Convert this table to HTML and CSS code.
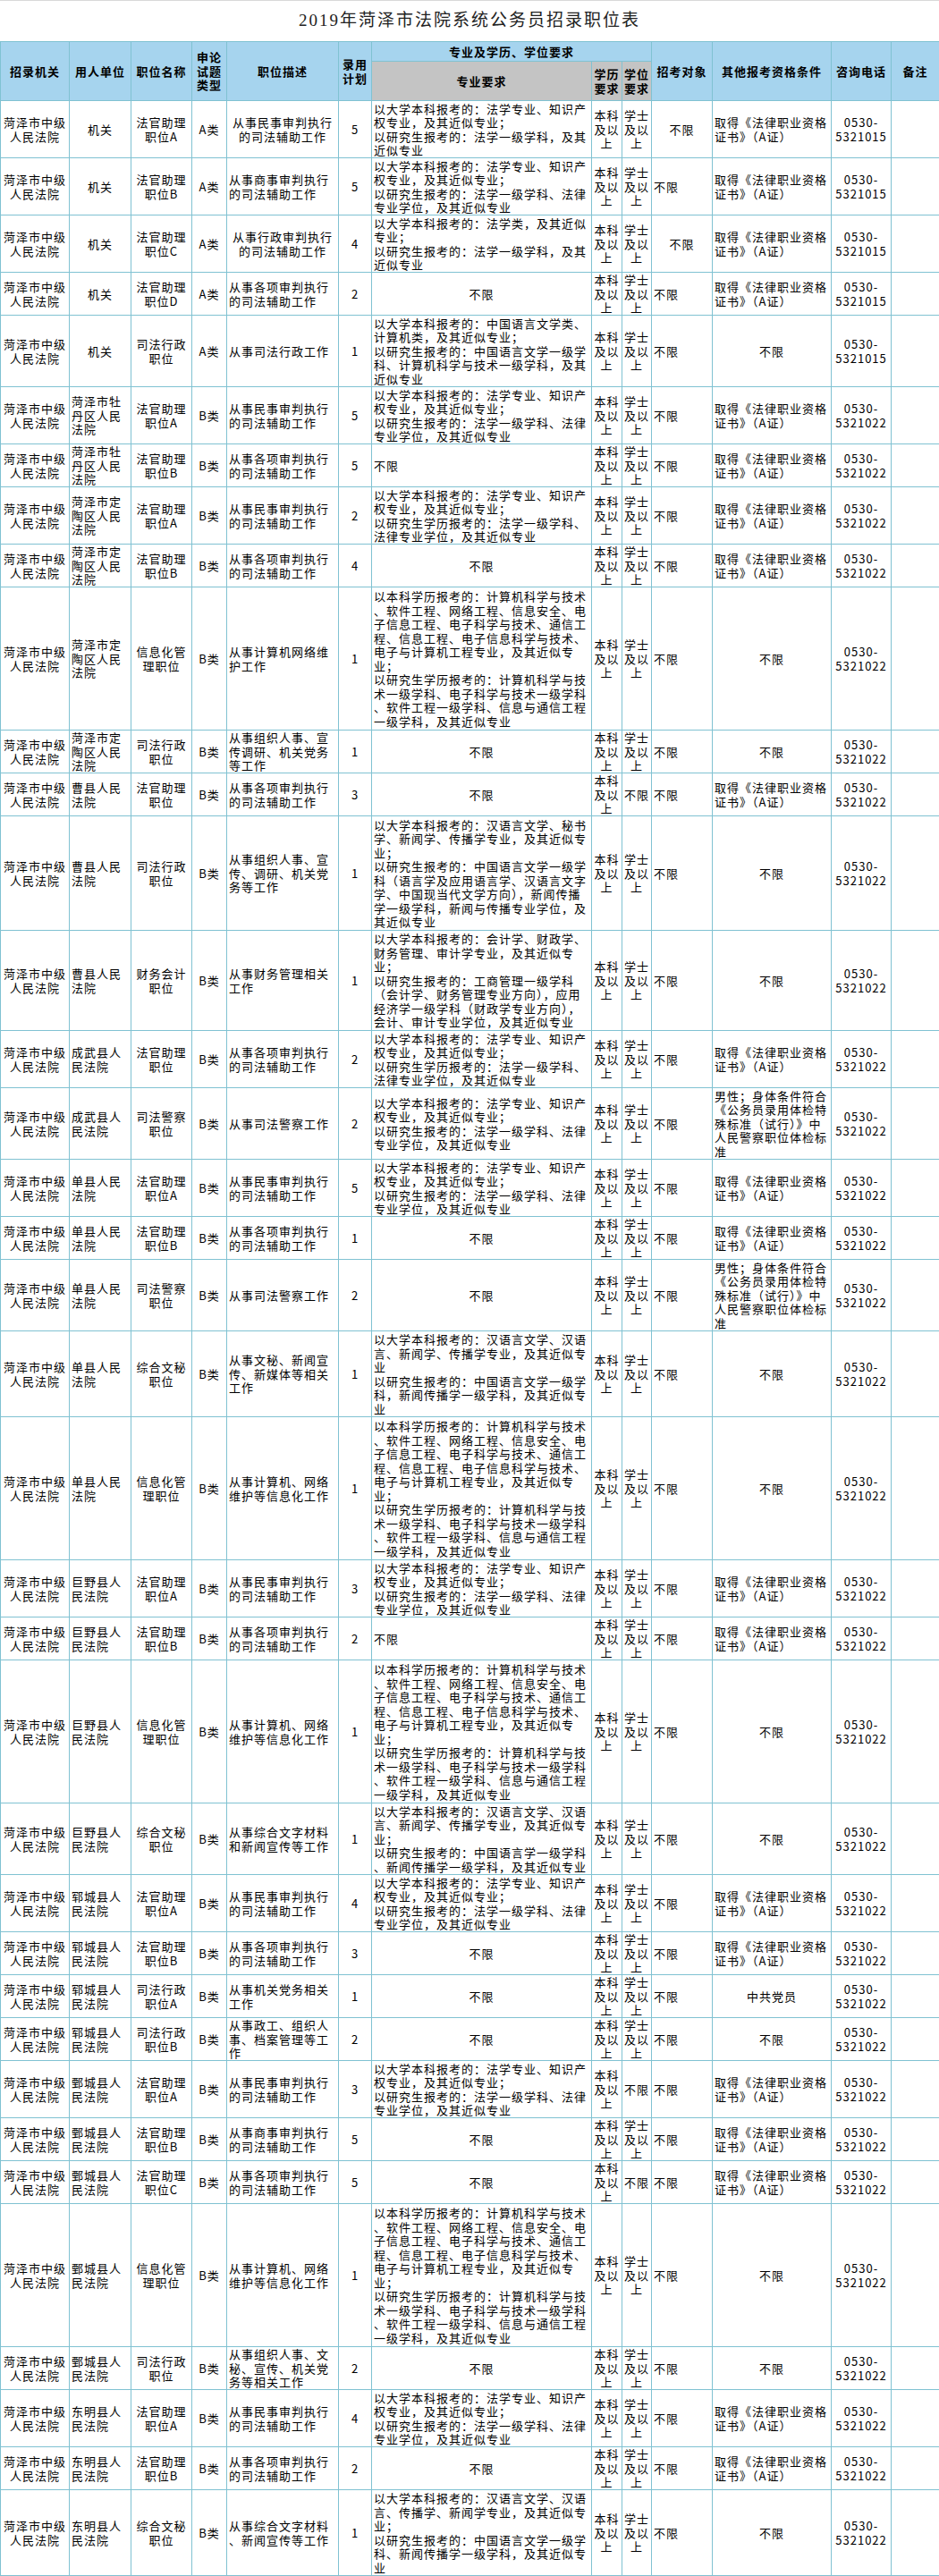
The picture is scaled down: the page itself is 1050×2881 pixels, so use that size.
FILE: index.html
```html
<!DOCTYPE html>
<html lang="zh-CN">
<head>
<meta charset="utf-8">
<title>2019年菏泽市法院系统公务员招录职位表</title>
<link rel="stylesheet" href="styles.css">
</head>
<body>
<div class="title">2019年菏泽市法院系统公务员招录职位表</div>
<table class="grid">
<colgroup>
<col class="c1"><col class="c2"><col class="c3"><col class="c4"><col class="c5"><col class="c6"><col class="c7"><col class="c8"><col class="c9"><col class="c10"><col class="c11"><col class="c12"><col class="c13">
</colgroup>
<thead>
<tr class="hd1">
<th rowspan="2">招录机关</th><th rowspan="2">用人单位</th><th rowspan="2">职位名称</th><th rowspan="2">申论<br>试题<br>类型</th><th rowspan="2">职位描述</th><th rowspan="2">录用<br>计划</th><th colspan="3">专业及学历、学位要求</th><th rowspan="2">招考对象</th><th rowspan="2">其他报考资格条件</th><th rowspan="2">咨询电话</th><th rowspan="2">备注</th>
</tr>
<tr class="hd2">
<th class="gray">专业要求</th><th class="gray">学历<br>要求</th><th class="gray">学位<br>要求</th>
</tr>
</thead>
<tbody>
<tr class="h4"><td>菏泽市中级<br>人民法院</td><td>机关</td><td>法官助理<br>职位A</td><td>A类</td><td>从事民事审判执行<br>的司法辅助工作</td><td>5</td><td class="l">以大学本科报考的：法学专业、知识产<br>权专业，及其近似专业；<br>以研究生报考的：法学一级学科，及其<br>近似专业</td><td>本科<br>及以<br>上</td><td>学士<br>及以<br>上</td><td>不限</td><td class="l">取得《法律职业资格<br>证书》（A证）</td><td>0530-<br>5321015</td><td></td></tr>
<tr class="h4"><td>菏泽市中级<br>人民法院</td><td>机关</td><td>法官助理<br>职位B</td><td>A类</td><td class="l">从事商事审判执行<br>的司法辅助工作</td><td>5</td><td class="l">以大学本科报考的：法学专业、知识产<br>权专业，及其近似专业；<br>以研究生报考的：法学一级学科、法律<br>专业学位，及其近似专业</td><td>本科<br>及以<br>上</td><td>学士<br>及以<br>上</td><td class="l">不限</td><td class="l">取得《法律职业资格<br>证书》（A证）</td><td>0530-<br>5321015</td><td></td></tr>
<tr class="h4"><td>菏泽市中级<br>人民法院</td><td>机关</td><td>法官助理<br>职位C</td><td>A类</td><td>从事行政审判执行<br>的司法辅助工作</td><td>4</td><td class="l">以大学本科报考的：法学类，及其近似<br>专业；<br>以研究生报考的：法学一级学科，及其<br>近似专业</td><td>本科<br>及以<br>上</td><td>学士<br>及以<br>上</td><td>不限</td><td class="l">取得《法律职业资格<br>证书》（A证）</td><td>0530-<br>5321015</td><td></td></tr>
<tr class="h3"><td>菏泽市中级<br>人民法院</td><td>机关</td><td>法官助理<br>职位D</td><td>A类</td><td class="l">从事各项审判执行<br>的司法辅助工作</td><td>2</td><td>不限</td><td>本科<br>及以<br>上</td><td>学士<br>及以<br>上</td><td class="l">不限</td><td class="l">取得《法律职业资格<br>证书》（A证）</td><td>0530-<br>5321015</td><td></td></tr>
<tr class="h5"><td>菏泽市中级<br>人民法院</td><td>机关</td><td>司法行政<br>职位</td><td>A类</td><td class="l">从事司法行政工作</td><td>1</td><td class="l">以大学本科报考的：中国语言文学类、<br>计算机类，及其近似专业；<br>以研究生报考的：中国语言文学一级学<br>科、计算机科学与技术一级学科，及其<br>近似专业</td><td>本科<br>及以<br>上</td><td>学士<br>及以<br>上</td><td class="l">不限</td><td>不限</td><td>0530-<br>5321015</td><td></td></tr>
<tr class="h4"><td>菏泽市中级<br>人民法院</td><td class="l">菏泽市牡<br>丹区人民<br>法院</td><td>法官助理<br>职位A</td><td>B类</td><td class="l">从事民事审判执行<br>的司法辅助工作</td><td>5</td><td class="l">以大学本科报考的：法学专业、知识产<br>权专业，及其近似专业；<br>以研究生报考的：法学一级学科、法律<br>专业学位，及其近似专业</td><td>本科<br>及以<br>上</td><td>学士<br>及以<br>上</td><td class="l">不限</td><td class="l">取得《法律职业资格<br>证书》（A证）</td><td>0530-<br>5321022</td><td></td></tr>
<tr class="h3"><td>菏泽市中级<br>人民法院</td><td class="l">菏泽市牡<br>丹区人民<br>法院</td><td>法官助理<br>职位B</td><td>B类</td><td class="l">从事各项审判执行<br>的司法辅助工作</td><td>5</td><td class="l">不限</td><td>本科<br>及以<br>上</td><td>学士<br>及以<br>上</td><td class="l">不限</td><td class="l">取得《法律职业资格<br>证书》（A证）</td><td>0530-<br>5321022</td><td></td></tr>
<tr class="h4"><td>菏泽市中级<br>人民法院</td><td class="l">菏泽市定<br>陶区人民<br>法院</td><td>法官助理<br>职位A</td><td>B类</td><td class="l">从事民事审判执行<br>的司法辅助工作</td><td>2</td><td class="l">以大学本科报考的：法学专业、知识产<br>权专业，及其近似专业；<br>以研究生学历报考的：法学一级学科、<br>法律专业学位，及其近似专业</td><td>本科<br>及以<br>上</td><td>学士<br>及以<br>上</td><td class="l">不限</td><td class="l">取得《法律职业资格<br>证书》（A证）</td><td>0530-<br>5321022</td><td></td></tr>
<tr class="h3"><td>菏泽市中级<br>人民法院</td><td class="l">菏泽市定<br>陶区人民<br>法院</td><td>法官助理<br>职位B</td><td>B类</td><td class="l">从事各项审判执行<br>的司法辅助工作</td><td>4</td><td>不限</td><td>本科<br>及以<br>上</td><td>学士<br>及以<br>上</td><td class="l">不限</td><td class="l">取得《法律职业资格<br>证书》（A证）</td><td>0530-<br>5321022</td><td></td></tr>
<tr class="h10"><td>菏泽市中级<br>人民法院</td><td class="l">菏泽市定<br>陶区人民<br>法院</td><td>信息化管<br>理职位</td><td>B类</td><td class="l">从事计算机网络维<br>护工作</td><td>1</td><td class="l">以本科学历报考的：计算机科学与技术<br>、软件工程、网络工程、信息安全、电<br>子信息工程、电子科学与技术、通信工<br>程、信息工程、电子信息科学与技术、<br>电子与计算机工程专业，及其近似专<br>业；<br>以研究生学历报考的：计算机科学与技<br>术一级学科、电子科学与技术一级学科<br>、软件工程一级学科、信息与通信工程<br>一级学科，及其近似专业</td><td>本科<br>及以<br>上</td><td>学士<br>及以<br>上</td><td class="l">不限</td><td>不限</td><td>0530-<br>5321022</td><td></td></tr>
<tr class="h3"><td>菏泽市中级<br>人民法院</td><td class="l">菏泽市定<br>陶区人民<br>法院</td><td>司法行政<br>职位</td><td>B类</td><td class="l">从事组织人事、宣<br>传调研、机关党务<br>等工作</td><td>1</td><td>不限</td><td>本科<br>及以<br>上</td><td>学士<br>及以<br>上</td><td class="l">不限</td><td>不限</td><td>0530-<br>5321022</td><td></td></tr>
<tr class="h3"><td>菏泽市中级<br>人民法院</td><td class="l">曹县人民<br>法院</td><td>法官助理<br>职位</td><td>B类</td><td class="l">从事各项审判执行<br>的司法辅助工作</td><td>3</td><td>不限</td><td>本科<br>及以<br>上</td><td>不限</td><td class="l">不限</td><td class="l">取得《法律职业资格<br>证书》（A证）</td><td>0530-<br>5321022</td><td></td></tr>
<tr class="h8"><td>菏泽市中级<br>人民法院</td><td class="l">曹县人民<br>法院</td><td>司法行政<br>职位</td><td>B类</td><td class="l">从事组织人事、宣<br>传、调研、机关党<br>务等工作</td><td>1</td><td class="l">以大学本科报考的：汉语言文学、秘书<br>学、新闻学、传播学专业，及其近似专<br>业；<br>以研究生报考的：中国语言文学一级学<br>科（语言学及应用语言学、汉语言文字<br>学、中国现当代文学方向），新闻传播<br>学一级学科，新闻与传播专业学位，及<br>其近似专业</td><td>本科<br>及以<br>上</td><td>学士<br>及以<br>上</td><td class="l">不限</td><td>不限</td><td>0530-<br>5321022</td><td></td></tr>
<tr class="h7"><td>菏泽市中级<br>人民法院</td><td class="l">曹县人民<br>法院</td><td>财务会计<br>职位</td><td>B类</td><td class="l">从事财务管理相关<br>工作</td><td>1</td><td class="l">以大学本科报考的：会计学、财政学、<br>财务管理、审计学专业，及其近似专<br>业；<br>以研究生报考的：工商管理一级学科<br>（会计学、财务管理专业方向），应用<br>经济学一级学科（财政学专业方向），<br>会计、审计专业学位，及其近似专业</td><td>本科<br>及以<br>上</td><td>学士<br>及以<br>上</td><td class="l">不限</td><td>不限</td><td>0530-<br>5321022</td><td></td></tr>
<tr class="h4"><td>菏泽市中级<br>人民法院</td><td class="l">成武县人<br>民法院</td><td>法官助理<br>职位</td><td>B类</td><td class="l">从事各项审判执行<br>的司法辅助工作</td><td>2</td><td class="l">以大学本科报考的：法学专业、知识产<br>权专业，及其近似专业；<br>以研究生学历报考的：法学一级学科、<br>法律专业学位，及其近似专业</td><td>本科<br>及以<br>上</td><td>学士<br>及以<br>上</td><td class="l">不限</td><td class="l">取得《法律职业资格<br>证书》（A证）</td><td>0530-<br>5321022</td><td></td></tr>
<tr class="h5"><td>菏泽市中级<br>人民法院</td><td class="l">成武县人<br>民法院</td><td>司法警察<br>职位</td><td>B类</td><td class="l">从事司法警察工作</td><td>2</td><td class="l">以大学本科报考的：法学专业、知识产<br>权专业，及其近似专业；<br>以研究生报考的：法学一级学科、法律<br>专业学位，及其近似专业</td><td>本科<br>及以<br>上</td><td>学士<br>及以<br>上</td><td class="l">不限</td><td class="l">男性；身体条件符合<br>《公务员录用体检特<br>殊标准（试行）》中<br>人民警察职位体检标<br>准</td><td>0530-<br>5321022</td><td></td></tr>
<tr class="h4"><td>菏泽市中级<br>人民法院</td><td class="l">单县人民<br>法院</td><td>法官助理<br>职位A</td><td>B类</td><td class="l">从事民事审判执行<br>的司法辅助工作</td><td>5</td><td class="l">以大学本科报考的：法学专业、知识产<br>权专业，及其近似专业；<br>以研究生报考的：法学一级学科、法律<br>专业学位，及其近似专业</td><td>本科<br>及以<br>上</td><td>学士<br>及以<br>上</td><td class="l">不限</td><td class="l">取得《法律职业资格<br>证书》（A证）</td><td>0530-<br>5321022</td><td></td></tr>
<tr class="h3"><td>菏泽市中级<br>人民法院</td><td class="l">单县人民<br>法院</td><td>法官助理<br>职位B</td><td>B类</td><td class="l">从事各项审判执行<br>的司法辅助工作</td><td>1</td><td>不限</td><td>本科<br>及以<br>上</td><td>学士<br>及以<br>上</td><td class="l">不限</td><td class="l">取得《法律职业资格<br>证书》（A证）</td><td>0530-<br>5321022</td><td></td></tr>
<tr class="h5"><td>菏泽市中级<br>人民法院</td><td class="l">单县人民<br>法院</td><td>司法警察<br>职位</td><td>B类</td><td class="l">从事司法警察工作</td><td>2</td><td>不限</td><td>本科<br>及以<br>上</td><td>学士<br>及以<br>上</td><td class="l">不限</td><td class="l">男性；身体条件符合<br>《公务员录用体检特<br>殊标准（试行）》中<br>人民警察职位体检标<br>准</td><td>0530-<br>5321022</td><td></td></tr>
<tr class="h6"><td>菏泽市中级<br>人民法院</td><td class="l">单县人民<br>法院</td><td>综合文秘<br>职位</td><td>B类</td><td class="l">从事文秘、新闻宣<br>传、新媒体等相关<br>工作</td><td>1</td><td class="l">以大学本科报考的：汉语言文学、汉语<br>言、新闻学、传播学专业，及其近似专<br>业<br>以研究生报考的：中国语言文学一级学<br>科，新闻传播学一级学科，及其近似专<br>业</td><td>本科<br>及以<br>上</td><td>学士<br>及以<br>上</td><td class="l">不限</td><td>不限</td><td>0530-<br>5321022</td><td></td></tr>
<tr class="h10"><td>菏泽市中级<br>人民法院</td><td class="l">单县人民<br>法院</td><td>信息化管<br>理职位</td><td>B类</td><td class="l">从事计算机、网络<br>维护等信息化工作</td><td>1</td><td class="l">以本科学历报考的：计算机科学与技术<br>、软件工程、网络工程、信息安全、电<br>子信息工程、电子科学与技术、通信工<br>程、信息工程、电子信息科学与技术、<br>电子与计算机工程专业，及其近似专<br>业；<br>以研究生学历报考的：计算机科学与技<br>术一级学科、电子科学与技术一级学科<br>、软件工程一级学科、信息与通信工程<br>一级学科，及其近似专业</td><td>本科<br>及以<br>上</td><td>学士<br>及以<br>上</td><td class="l">不限</td><td>不限</td><td>0530-<br>5321022</td><td></td></tr>
<tr class="h4"><td>菏泽市中级<br>人民法院</td><td class="l">巨野县人<br>民法院</td><td>法官助理<br>职位A</td><td>B类</td><td class="l">从事民事审判执行<br>的司法辅助工作</td><td>3</td><td class="l">以大学本科报考的：法学专业、知识产<br>权专业，及其近似专业；<br>以研究生报考的：法学一级学科、法律<br>专业学位，及其近似专业</td><td>本科<br>及以<br>上</td><td>学士<br>及以<br>上</td><td class="l">不限</td><td class="l">取得《法律职业资格<br>证书》（A证）</td><td>0530-<br>5321022</td><td></td></tr>
<tr class="h3"><td>菏泽市中级<br>人民法院</td><td class="l">巨野县人<br>民法院</td><td>法官助理<br>职位B</td><td>B类</td><td class="l">从事各项审判执行<br>的司法辅助工作</td><td>2</td><td class="l">不限</td><td>本科<br>及以<br>上</td><td>学士<br>及以<br>上</td><td class="l">不限</td><td class="l">取得《法律职业资格<br>证书》（A证）</td><td>0530-<br>5321022</td><td></td></tr>
<tr class="h10"><td>菏泽市中级<br>人民法院</td><td class="l">巨野县人<br>民法院</td><td>信息化管<br>理职位</td><td>B类</td><td class="l">从事计算机、网络<br>维护等信息化工作</td><td>1</td><td class="l">以本科学历报考的：计算机科学与技术<br>、软件工程、网络工程、信息安全、电<br>子信息工程、电子科学与技术、通信工<br>程、信息工程、电子信息科学与技术、<br>电子与计算机工程专业，及其近似专<br>业；<br>以研究生学历报考的：计算机科学与技<br>术一级学科、电子科学与技术一级学科<br>、软件工程一级学科、信息与通信工程<br>一级学科，及其近似专业</td><td>本科<br>及以<br>上</td><td>学士<br>及以<br>上</td><td class="l">不限</td><td>不限</td><td>0530-<br>5321022</td><td></td></tr>
<tr class="h5"><td>菏泽市中级<br>人民法院</td><td class="l">巨野县人<br>民法院</td><td>综合文秘<br>职位</td><td>B类</td><td class="l">从事综合文字材料<br>和新闻宣传等工作</td><td>1</td><td class="l">以大学本科报考的：汉语言文学、汉语<br>言、新闻学、传播学专业，及其近似专<br>业；<br>以研究生报考的：中国语言学一级学科<br>、新闻传播学一级学科，及其近似专业</td><td>本科<br>及以<br>上</td><td>学士<br>及以<br>上</td><td class="l">不限</td><td>不限</td><td>0530-<br>5321022</td><td></td></tr>
<tr class="h4"><td>菏泽市中级<br>人民法院</td><td class="l">郓城县人<br>民法院</td><td>法官助理<br>职位A</td><td>B类</td><td class="l">从事民事审判执行<br>的司法辅助工作</td><td>4</td><td class="l">以大学本科报考的：法学专业、知识产<br>权专业，及其近似专业；<br>以研究生报考的：法学一级学科、法律<br>专业学位，及其近似专业</td><td>本科<br>及以<br>上</td><td>学士<br>及以<br>上</td><td class="l">不限</td><td class="l">取得《法律职业资格<br>证书》（A证）</td><td>0530-<br>5321022</td><td></td></tr>
<tr class="h3"><td>菏泽市中级<br>人民法院</td><td class="l">郓城县人<br>民法院</td><td>法官助理<br>职位B</td><td>B类</td><td class="l">从事各项审判执行<br>的司法辅助工作</td><td>3</td><td>不限</td><td>本科<br>及以<br>上</td><td>学士<br>及以<br>上</td><td class="l">不限</td><td class="l">取得《法律职业资格<br>证书》（A证）</td><td>0530-<br>5321022</td><td></td></tr>
<tr class="h3"><td>菏泽市中级<br>人民法院</td><td class="l">郓城县人<br>民法院</td><td>司法行政<br>职位A</td><td>B类</td><td class="l">从事机关党务相关<br>工作</td><td>1</td><td>不限</td><td>本科<br>及以<br>上</td><td>学士<br>及以<br>上</td><td class="l">不限</td><td>中共党员</td><td>0530-<br>5321022</td><td></td></tr>
<tr class="h3"><td>菏泽市中级<br>人民法院</td><td class="l">郓城县人<br>民法院</td><td>司法行政<br>职位B</td><td>B类</td><td class="l">从事政工、组织人<br>事、档案管理等工<br>作</td><td>2</td><td>不限</td><td>本科<br>及以<br>上</td><td>学士<br>及以<br>上</td><td class="l">不限</td><td>不限</td><td>0530-<br>5321022</td><td></td></tr>
<tr class="h4"><td>菏泽市中级<br>人民法院</td><td class="l">鄄城县人<br>民法院</td><td>法官助理<br>职位A</td><td>B类</td><td class="l">从事民事审判执行<br>的司法辅助工作</td><td>3</td><td class="l">以大学本科报考的：法学专业、知识产<br>权专业，及其近似专业；<br>以研究生报考的：法学一级学科、法律<br>专业学位，及其近似专业</td><td>本科<br>及以<br>上</td><td>不限</td><td class="l">不限</td><td class="l">取得《法律职业资格<br>证书》（A证）</td><td>0530-<br>5321022</td><td></td></tr>
<tr class="h3"><td>菏泽市中级<br>人民法院</td><td class="l">鄄城县人<br>民法院</td><td>法官助理<br>职位B</td><td>B类</td><td class="l">从事商事审判执行<br>的司法辅助工作</td><td>5</td><td>不限</td><td>本科<br>及以<br>上</td><td>学士<br>及以<br>上</td><td class="l">不限</td><td class="l">取得《法律职业资格<br>证书》（A证）</td><td>0530-<br>5321022</td><td></td></tr>
<tr class="h3"><td>菏泽市中级<br>人民法院</td><td class="l">鄄城县人<br>民法院</td><td>法官助理<br>职位C</td><td>B类</td><td class="l">从事各项审判执行<br>的司法辅助工作</td><td>5</td><td>不限</td><td>本科<br>及以<br>上</td><td>不限</td><td class="l">不限</td><td class="l">取得《法律职业资格<br>证书》（A证）</td><td>0530-<br>5321022</td><td></td></tr>
<tr class="h10"><td>菏泽市中级<br>人民法院</td><td class="l">鄄城县人<br>民法院</td><td>信息化管<br>理职位</td><td>B类</td><td class="l">从事计算机、网络<br>维护等信息化工作</td><td>1</td><td class="l">以本科学历报考的：计算机科学与技术<br>、软件工程、网络工程、信息安全、电<br>子信息工程、电子科学与技术、通信工<br>程、信息工程、电子信息科学与技术、<br>电子与计算机工程专业，及其近似专<br>业；<br>以研究生学历报考的：计算机科学与技<br>术一级学科、电子科学与技术一级学科<br>、软件工程一级学科、信息与通信工程<br>一级学科，及其近似专业</td><td>本科<br>及以<br>上</td><td>学士<br>及以<br>上</td><td class="l">不限</td><td>不限</td><td>0530-<br>5321022</td><td></td></tr>
<tr class="h3"><td>菏泽市中级<br>人民法院</td><td class="l">鄄城县人<br>民法院</td><td>司法行政<br>职位</td><td>B类</td><td class="l">从事组织人事、文<br>秘、宣传、机关党<br>务等相关工作</td><td>2</td><td>不限</td><td>本科<br>及以<br>上</td><td>学士<br>及以<br>上</td><td class="l">不限</td><td>不限</td><td>0530-<br>5321022</td><td></td></tr>
<tr class="h4"><td>菏泽市中级<br>人民法院</td><td class="l">东明县人<br>民法院</td><td>法官助理<br>职位A</td><td>B类</td><td class="l">从事民事审判执行<br>的司法辅助工作</td><td>4</td><td class="l">以大学本科报考的：法学专业、知识产<br>权专业，及其近似专业；<br>以研究生报考的：法学一级学科、法律<br>专业学位，及其近似专业</td><td>本科<br>及以<br>上</td><td>学士<br>及以<br>上</td><td class="l">不限</td><td class="l">取得《法律职业资格<br>证书》（A证）</td><td>0530-<br>5321022</td><td></td></tr>
<tr class="h3"><td>菏泽市中级<br>人民法院</td><td class="l">东明县人<br>民法院</td><td>法官助理<br>职位B</td><td>B类</td><td class="l">从事各项审判执行<br>的司法辅助工作</td><td>2</td><td>不限</td><td>本科<br>及以<br>上</td><td>学士<br>及以<br>上</td><td class="l">不限</td><td class="l">取得《法律职业资格<br>证书》（A证）</td><td>0530-<br>5321022</td><td></td></tr>
<tr class="h6"><td>菏泽市中级<br>人民法院</td><td class="l">东明县人<br>民法院</td><td>综合文秘<br>职位</td><td>B类</td><td class="l">从事综合文字材料<br>、新闻宣传等工作</td><td>1</td><td class="l">以大学本科报考的：汉语言文学、汉语<br>言、传播学、新闻学专业，及其近似专<br>业；<br>以研究生报考的：中国语言文学一级学<br>科、新闻传播学一级学科，及其近似专<br>业</td><td>本科<br>及以<br>上</td><td>学士<br>及以<br>上</td><td class="l">不限</td><td>不限</td><td>0530-<br>5321022</td><td></td></tr>
</tbody>
</table>
</body>
</html>
```

FILE: styles.css
```css
html, body {
  margin: 0;
  padding: 0;
  background: #ffffff;
}

body {
  width: 1050px;
  font-family: "Noto Sans CJK SC", "Noto Sans", sans-serif;
  color: #000000;
}

.title {
  height: 46px;
  box-sizing: border-box;
  border-top: 1px solid #d9d9d9;
  text-align: center;
  line-height: 44px;
  font-family: "Liberation Serif", "Noto Sans CJK SC", serif;
  font-size: 19px;
  letter-spacing: 2px;
  color: #222222;
}

.grid {
  width: 1050px;
  table-layout: fixed;
  border-collapse: collapse;
}

.c1 { width: 77px; }
.c2 { width: 69px; }
.c3 { width: 68px; }
.c4 { width: 39px; }
.c5 { width: 125px; }
.c6 { width: 37px; }
.c7 { width: 246px; }
.c8 { width: 34px; }
.c9 { width: 33px; }
.c10 { width: 68px; }
.c11 { width: 133px; }
.c12 { width: 67px; }
.c13 { width: 54px; }

.grid th,
.grid td {
  border: 1px solid #80c2d2;
  padding: 0 2px;
  text-align: center;
  vertical-align: middle;
  white-space: nowrap;
  overflow: hidden;
  font-size: 13px;
  letter-spacing: 1px;
  line-height: 15.5px;
  color: #000000;
}

.grid th {
  background: #a6d4ee;
  font-weight: bold;
}

.grid th.gray {
  background: #c4c4c4;
}

.hd1 { height: 22px; }
.hd2 { height: 44px; }

.grid td.l { text-align: left; }

.h3 { height: 48px; }
.h4 { height: 64px; }
.h5 { height: 80px; }
.h6 { height: 96px; }
.h7 { height: 112px; }
.h8 { height: 128px; }
.h10 { height: 160px; }
```
